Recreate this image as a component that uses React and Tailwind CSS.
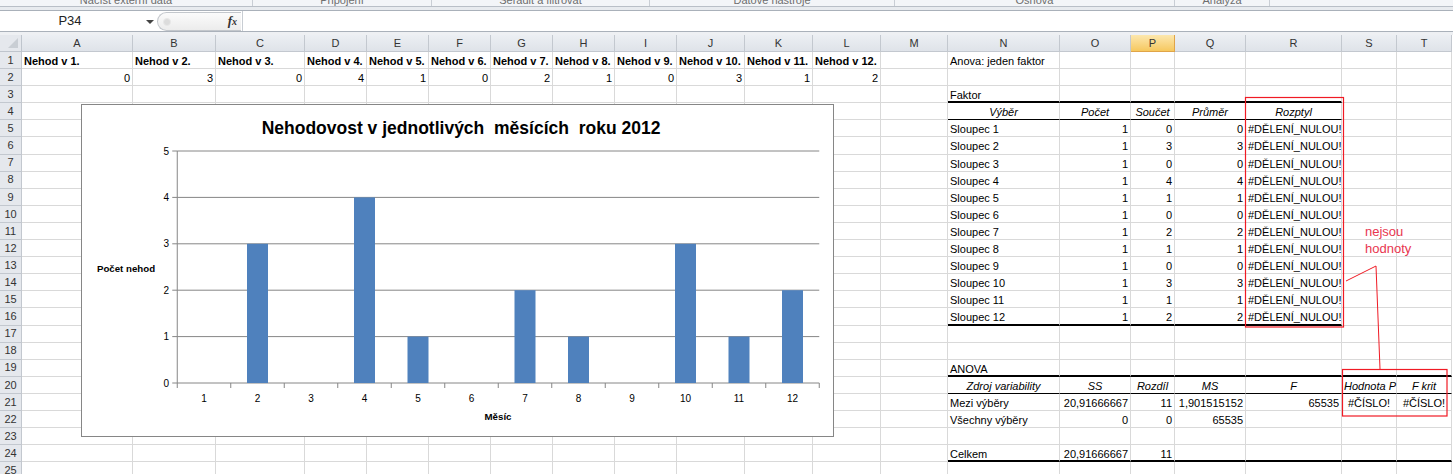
import React from 'react';

const letters = ['A', 'B', 'C', 'D', 'E', 'F', 'G', 'H', 'I', 'J', 'K', 'L', 'M', 'N', 'O', 'P', 'Q', 'R', 'S', 'T'];

const groups = [
  { w: 'w-[253px]', t: 'Načíst externí data' },
  { w: 'w-[179px]', t: 'Připojení' },
  { w: 'w-[218px]', t: 'Seřadit a filtrovat' },
  { w: 'w-[245px]', t: 'Datové nástroje' },
  { w: 'w-[280px]', t: 'Osnova' },
  { w: 'w-[95px]', t: 'Analýza' },
];

const kinds = {
  l: 'text-left',
  r: 'text-right',
  c: 'text-center',
  b: 'text-left font-bold text-[10.5px]',
  i: 'text-center italic',
};

const cells = {};
const put = (row, col, v, k = 'l') => {
  cells[`${col}${row}`] = { v, k };
};

// row 1 + 2: monthly counts
const counts = [0, 3, 0, 4, 1, 0, 2, 1, 0, 3, 1, 2];
counts.forEach((c, i) => {
  put(1, letters[i], `Nehod v ${i + 1}.`, 'b');
  put(2, letters[i], String(c), 'r');
});

// anova output
put(1, 'N', 'Anova: jeden faktor');
put(3, 'N', 'Faktor');
['Výběr', 'Počet', 'Součet', 'Průměr', 'Rozptyl'].forEach((h, i) => put(4, letters[13 + i], h, 'i'));
counts.forEach((c, i) => {
  const r = 5 + i;
  put(r, 'N', `Sloupec ${i + 1}`);
  put(r, 'O', '1', 'r');
  put(r, 'P', String(c), 'r');
  put(r, 'Q', String(c), 'r');
  put(r, 'R', '#DĚLENÍ_NULOU!', 'c');
});
put(19, 'N', 'ANOVA');
['Zdroj variability', 'SS', 'Rozdíl', 'MS', 'F', 'Hodnota P', 'F krit'].forEach((h, i) =>
  put(20, letters[13 + i], h, 'i')
);
put(21, 'N', 'Mezi výběry');
put(21, 'O', '20,91666667', 'r');
put(21, 'P', '11', 'r');
put(21, 'Q', '1,901515152', 'r');
put(21, 'R', '65535', 'r');
put(21, 'S', '#ČÍSLO!', 'c');
put(21, 'T', '#ČÍSLO!', 'c');
put(22, 'N', 'Všechny výběry');
put(22, 'O', '0', 'r');
put(22, 'P', '0', 'r');
put(22, 'Q', '65535', 'r');
put(24, 'N', 'Celkem');
put(24, 'O', '20,91666667', 'r');
put(24, 'P', '11', 'r');

function bottomLine(row, idx) {
  const narrow = idx >= 13 && idx <= 17;
  const wide = idx >= 13 && idx <= 19;
  if (((row === 3 || row === 16) && narrow) || ((row === 19 || row === 24) && wide)) {
    return 'border-b-2 border-b-black';
  }
  if ((row === 4 && narrow) || (row === 20 && wide)) return 'border-b border-b-black';
  return 'border-b border-b-[#d9d9d9]';
}

const rows = Array.from({ length: 25 }, (_, i) => i + 1);

function Chart() {
  const x0 = 95.25;
  const cw = 53.5;
  const y = (v) => 278 - v * 46.4;
  return (
    <div className="absolute left-[81px] top-[104px] w-[753px] h-[333px] border border-[#868686] bg-white">
      <svg width="751" height="331" className="block" style={{ fontFamily: '"Liberation Sans", Arial, sans-serif' }}>
        <text x="379" y="29" textAnchor="middle" fontSize="17.5" fontWeight="bold" fill="#000" className="whitespace-pre">
          Nehodovost v jednotlivých  měsících  roku 2012
        </text>
        {[0, 1, 2, 3, 4, 5].map((v) => (
          <g key={v}>
            <line x1={x0} x2={x0 + cw * 12} y1={y(v)} y2={y(v)} stroke="#868686" strokeWidth="1" />
            <line x1={x0 - 5} x2={x0} y1={y(v)} y2={y(v)} stroke="#868686" strokeWidth="1" />
            <text x="87" y={y(v) + 3.5} textAnchor="end" fontSize="10" fill="#000">
              {v}
            </text>
          </g>
        ))}
        <line x1={x0} x2={x0} y1={y(5)} y2={y(0)} stroke="#868686" strokeWidth="1" />
        {Array.from({ length: 13 }, (_, i) => (
          <line key={i} x1={x0 + cw * i} x2={x0 + cw * i} y1={y(0)} y2={y(0) + 5} stroke="#868686" strokeWidth="1" />
        ))}
        {counts.map((c, i) => {
          const cx = x0 + cw * (i + 0.5);
          return (
            <g key={i}>
              {c > 0 && <rect x={cx - 10.5} y={y(c)} width="21" height={c * 46.4} fill="#4f81bd" />}
              <text x={cx} y="297" textAnchor="middle" fontSize="10" fill="#000">
                {i + 1}
              </text>
            </g>
          );
        })}
        <text x="44" y="167" textAnchor="middle" fontSize="9.7" fontWeight="bold" fill="#000">
          Počet nehod
        </text>
        <text x="416" y="315" textAnchor="middle" fontSize="9.7" fontWeight="bold" fill="#000">
          Měsíc
        </text>
      </svg>
    </div>
  );
}

function Notes() {
  return (
    <svg width="1453" height="474" className="absolute left-0 top-0 pointer-events-none" style={{ fontFamily: '"Liberation Sans", Arial, sans-serif' }}>
      <rect x="1245.5" y="97.5" width="98" height="229.5" fill="none" stroke="#f01a24" strokeWidth="1.2" />
      <rect x="1342.5" y="369.5" width="104.5" height="46.5" fill="none" stroke="#f01a24" strokeWidth="1.2" />
      <polyline points="1346,281 1376,266 1380,369" fill="none" stroke="#f01a24" strokeWidth="1" />
      <text x="1365" y="236" fontSize="13" fill="#e8364f">nejsou</text>
      <text x="1365" y="253" fontSize="13" fill="#e8364f">hodnoty</text>
    </svg>
  );
}

export default function App() {
  return (
    <div
      className="relative w-[1453px] h-[474px] overflow-hidden bg-white text-black"
      style={{ fontFamily: '"Liberation Sans", Arial, sans-serif' }}
    >
      {/* ribbon group labels, only their lower half shows */}
      <div className="flex h-[7px] overflow-hidden bg-[#f3f5f8] border-b border-[#b9bfc7]">
        {groups.map((g) => (
          <div key={g.t} className={`${g.w} flex-none border-r border-[#c9ced5] text-center text-[11px] leading-[12px] text-[#6e6e6e] -mt-[6px]`}>
            {g.t}
          </div>
        ))}
        <div className="flex-1" />
      </div>
      <div className="h-[3px] bg-[#e8ebef]" />
      {/* formula bar */}
      <div className="flex h-[22px] bg-white border-y border-[#aab1ba]">
        <div className="relative w-[157px] flex-none flex items-center">
          <span className="w-[140px] text-center text-[13px] text-[#222]">P34</span>
          <span className="absolute left-[146px] top-[9px] w-0 h-0 border-l-[4px] border-r-[4px] border-t-[4px] border-l-transparent border-r-transparent border-t-[#444]" />
        </div>
        <div className="w-[86px] flex-none flex items-center py-[1px] border-r border-[#c8cdd3]">
          <div className="relative h-[19px] w-[84px] rounded-l-full border border-r-0 border-[#c3c7cc] bg-gradient-to-b from-[#fbfbfb] to-[#ececec] flex items-center justify-end pr-[4px]">
            <span className="absolute left-[5px] top-[5px] w-[8px] h-[8px] rounded-full bg-[#dcdcdc] border border-[#e8e8e8]" />
            <span className="italic font-bold text-[13px] text-[#333]" style={{ fontFamily: '"Liberation Serif", serif' }}>
              f<span className="text-[10px]">x</span>
            </span>
          </div>
        </div>
        <div className="flex-1" />
      </div>
      <div className="h-[3px] bg-[#eef0f3]" />

      {/* sheet grid */}
      <div className="grid grid-cols-[22px_111px_83px_89px_62px_62px_62px_62px_62px_62px_68px_68px_68px_67px_112px_71px_44px_71px_96px_55px_55px]">
        <div className="relative h-[17px] bg-[#e5e8ed] border-r border-b border-[#bfc5cd]">
          <svg width="10" height="10" className="absolute right-[3px] bottom-[3px]">
            <polygon points="10,0 10,10 0,10" fill="#c9ced4" />
          </svg>
        </div>
        {letters.map((l) =>
          l === 'P' ? (
            <div key={l} className="h-[17px] flex items-center justify-center text-[11px] text-[#333] border-r border-b border-[#e0a448] bg-gradient-to-b from-[#fce7ad] to-[#f6c85d]">
              {l}
            </div>
          ) : (
            <div key={l} className="h-[17px] flex items-center justify-center text-[11px] text-[#333] border-r border-b border-[#c3c8cf] bg-gradient-to-b from-[#eceff3] to-[#dfe3e9]">
              {l}
            </div>
          )
        )}
        {rows.map((r) => (
          <React.Fragment key={r}>
            <div className="h-[17.1px] flex items-center justify-center text-[11px] text-[#333] bg-[#e5e8ed] border-r border-b border-[#c3c8cf]">
              {r}
            </div>
            {letters.map((l, idx) => {
              const c = cells[`${l}${r}`];
              return (
                <div
                  key={l}
                  className={`h-[17.1px] border-r border-r-[#d9d9d9] ${bottomLine(r, idx)} px-[2px] text-[11px] leading-[19px] whitespace-nowrap ${c ? kinds[c.k] : ''}`}
                >
                  {c ? c.v : ''}
                </div>
              );
            })}
          </React.Fragment>
        ))}
      </div>

      <Chart />
      <Notes />
    </div>
  );
}
